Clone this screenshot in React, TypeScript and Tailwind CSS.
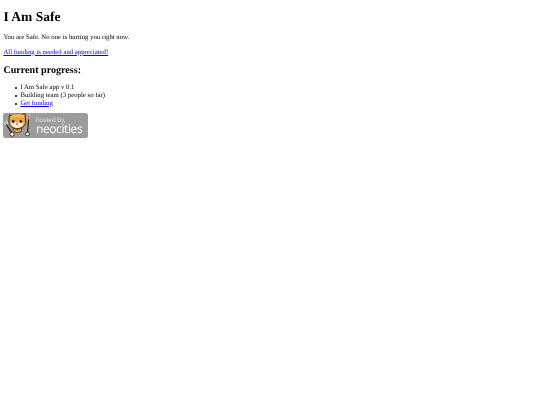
const serif = "font-['Liberation_Serif','Times_New_Roman',serif]";

function NeocitiesBadge() {
  return (
    <a href="#" className="relative block h-[25px] w-[85px] rounded-[2.5px] bg-[#9c9c9c]">
      <svg viewBox="0 0 34 28" className="absolute -top-[2px] left-0 h-[28px] w-[34px]">
        {/* fork */}
        <path d="M3 13 L9 22" stroke="#2e2e2e" strokeWidth="1.5" fill="none" />
        <path d="M0.8 12 L3.4 14.5 M2 10.5 L4.4 13.5 M3.8 9.8 L5 13" stroke="#f0f0f0" strokeWidth="0.8" fill="none" />
        <circle cx="9" cy="23.2" r="2.1" fill="#f8f4e8" stroke="#2b2b2b" strokeWidth="0.9" />
        {/* head */}
        <path d="M6 9 L6.5 4 L10 5 Q14 1.5 18 3.5 L22 2.5 L22.5 9 Q23.5 14 19 16.5 Q14 18.5 9.5 16.5 Q5 14 6 9 Z" fill="#eda43a" stroke="#3a2a18" strokeWidth="0.9" />
        <path d="M7.5 7.5 Q14 4 21 7 L21 4.5 Q14 1.5 8 5 Z" fill="#f6c04c" />
        <path d="M8 12.5 Q11 9 14 12 Q17 9 20.5 12.5 Q19 17 14 17 Q9.5 17 8 12.5 Z" fill="#fbeed6" />
        <circle cx="10.3" cy="10.5" r="1.4" fill="#2b2b2b" />
        <circle cx="17.8" cy="10.5" r="1.4" fill="#2b2b2b" />
        <path d="M12.8 12.6 L15.2 12.6 L14 14.4 Z" fill="#c8373a" />
        {/* body */}
        <path d="M10 17 Q14 20 19 17 L18 21 Q14 22.5 11 21 Z" fill="#e99a35" stroke="#3a2a18" strokeWidth="0.7" />
        {/* paintbrush */}
        <path d="M24.6 21.5 L25.6 8" stroke="#3a2a18" strokeWidth="1.2" fill="none" />
        <path d="M24.6 8 Q25 4.5 26 3.2 Q27 5 26.8 8 Z" fill="#c8373a" stroke="#f2f2f2" strokeWidth="0.5" />
        <circle cx="24.5" cy="23" r="1.9" fill="#f8f4e8" stroke="#2b2b2b" strokeWidth="0.9" />
      </svg>
      <span className="absolute left-[32.6px] top-[5px] font-['Liberation_Sans',Arial,sans-serif] text-[6.5px] leading-[5.5px] text-[#e0e0e0]">
        hosted by,
      </span>
      <span className="absolute left-[32.6px] top-[10.5px] font-['Open_Sans','Liberation_Sans',sans-serif] text-[12px] leading-[10px] tracking-[-0.4px] text-white">
        neocities
      </span>
    </a>
  );
}

function Bullet({ children }: { children: React.ReactNode }) {
  return (
    <li className="flex items-center gap-[3px]">
      <span className="size-[2px] rounded-full bg-black" />
      {children}
    </li>
  );
}

export default function App() {
  return (
    <div className={`${serif} min-h-[405px] bg-white p-[3.4px] text-[6.75px] leading-[7.7px] text-black blur-[0.3px] [text-rendering:geometricPrecision]`}>
      <h1 className="mt-[5.7px] mb-[9.5px] text-[13.5px] leading-[15.5px] font-bold">I Am Safe</h1>
      <p className="my-[6.75px]">You are Safe. No one is hurting you right now.</p>
      <p className="my-[6.75px]">
        <a href="#" className="text-[#0000ee] underline">All funding is needed and appreciated!</a>
      </p>
      <h2 className="mt-[8.5px] mb-[8px] text-[10.1px] leading-[11.6px] font-bold">Current progress:</h2>
      <ul className="mt-[6.75px] mb-[6px] list-none pl-[12px]">
        <Bullet>I Am Safe app v 0.1</Bullet>
        <Bullet>Building team (3 people so far)</Bullet>
        <Bullet><a href="#" className="text-[#0000ee] underline">Get funding</a></Bullet>
      </ul>
      <NeocitiesBadge />
    </div>
  );
}
